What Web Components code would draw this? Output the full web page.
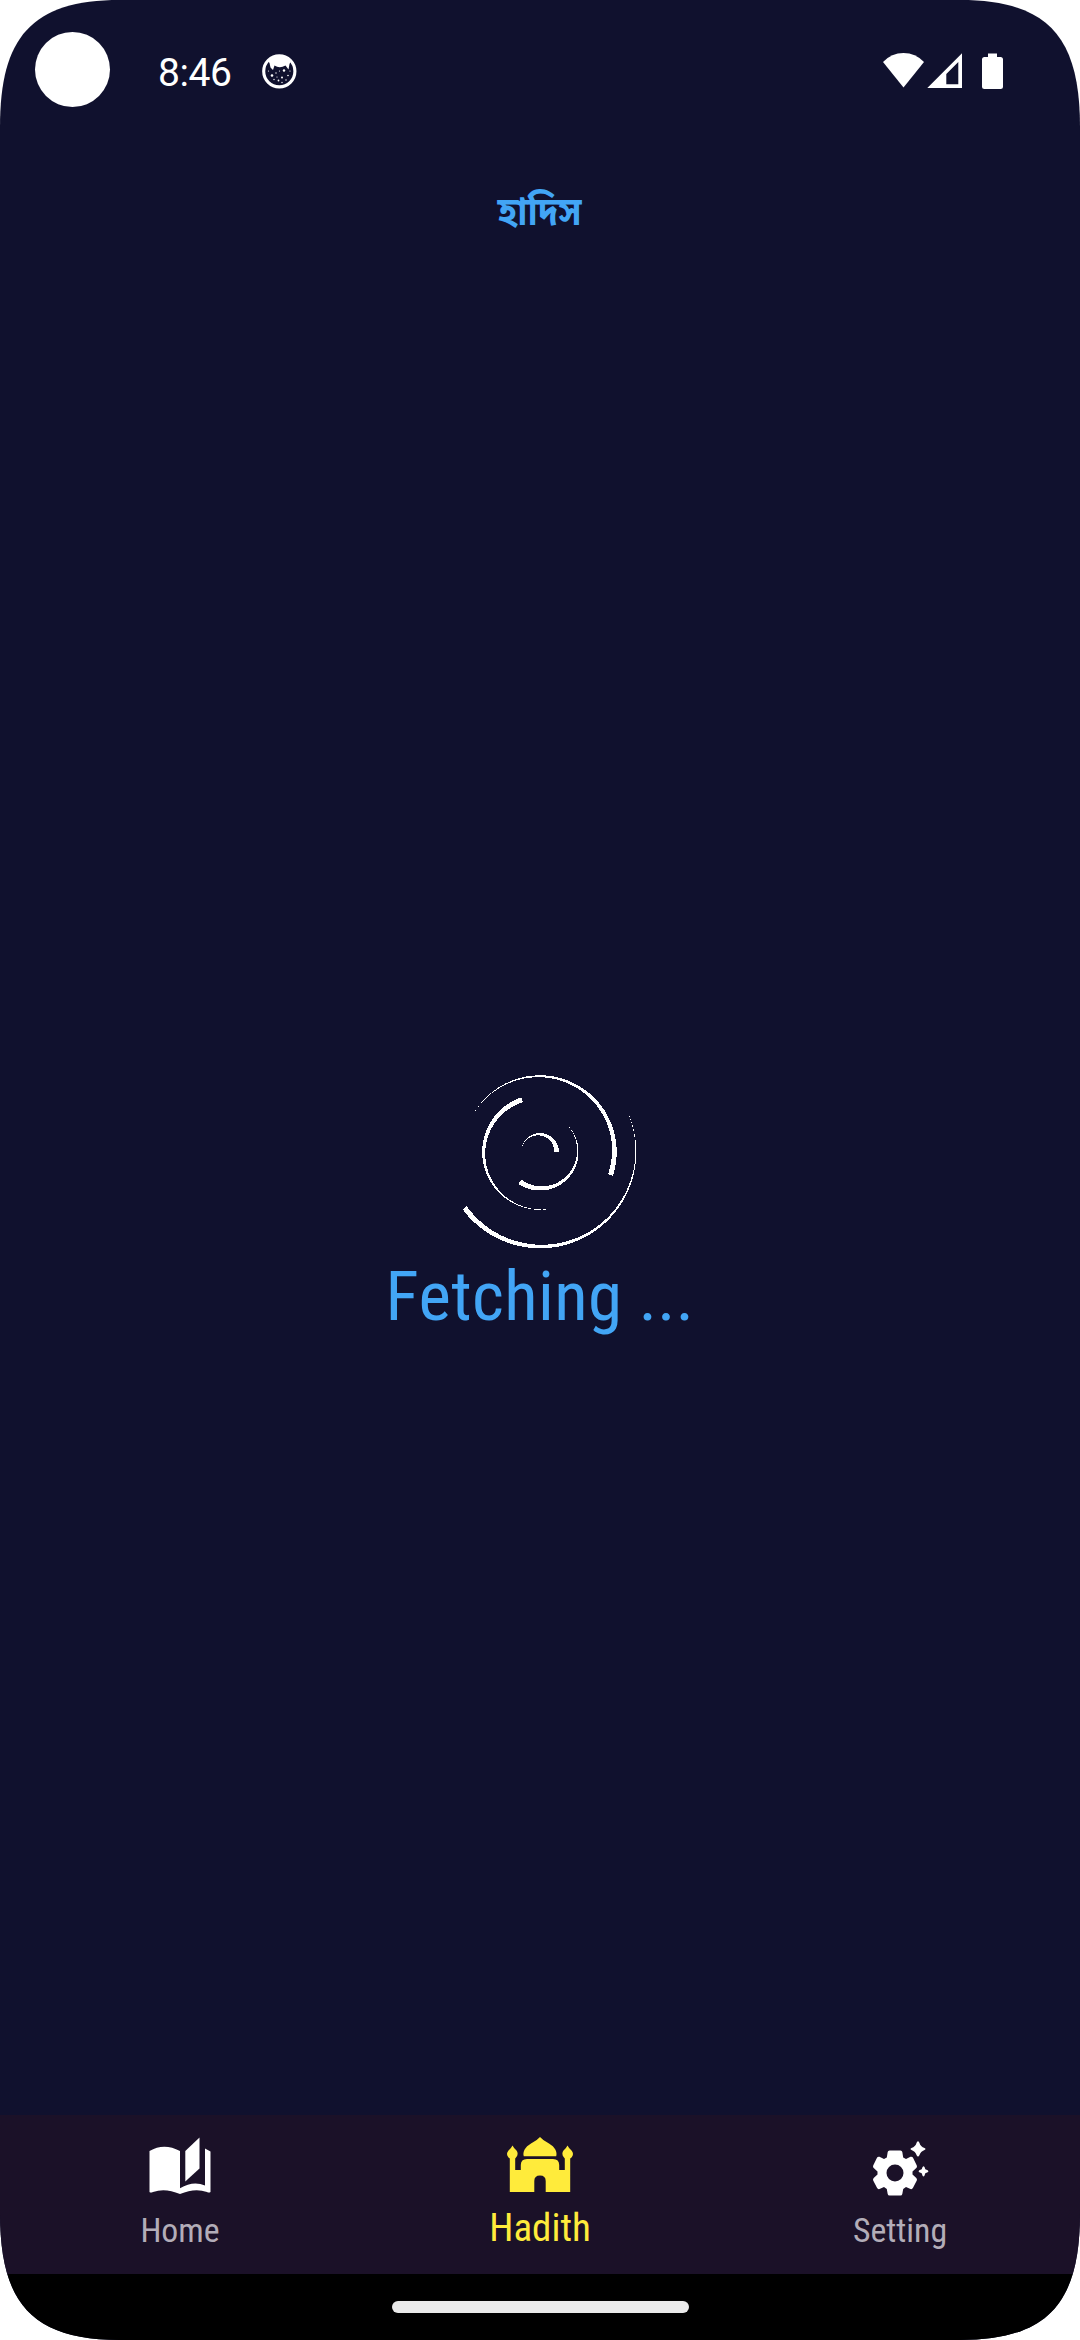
<!DOCTYPE html>
<html lang="bn">
<head>
<meta charset="utf-8">
<title>হাদিস</title>
<style>
html,body{margin:0;background:#fff;}
body{width:1080px;height:2340px;overflow:hidden;font-family:Roboto,"Liberation Sans",sans-serif;}
</style>
</head>
<body>
<hadith-app></hadith-app>
<script>
const define = (name, html, setup) => customElements.define(name, class extends HTMLElement {
  constructor() {
    super();
    this.attachShadow({mode: 'open'}).innerHTML = html;
  }
  connectedCallback() { if (setup) setup(this, this.shadowRoot); }
});

define('status-bar', `
<style>
:host{display:flex;height:142px;box-sizing:border-box;padding:32px 76px 0 35px;color:#fff;align-items:flex-start}
.cam{width:75px;height:75px;border-radius:50%;background:#fff}
.time{font-size:39px;letter-spacing:-.4px;line-height:48px;margin:17px 0 0 48px;width:104px;white-space:nowrap}
svg{display:block;flex:none}
.face{margin-top:22px}
.icons{margin-left:auto;margin-top:21px;display:flex}
</style>
<div class="cam"></div>
<div class="time">8:46</div>
<svg class="face" width="35" height="35" viewBox="0 0 35 35">
<circle cx="17.3" cy="17.3" r="15.6" fill="none" stroke="#fff" stroke-width="3.1"/>
<path d="M6 7Q17.500 -3 29 7L27.500 10L26.500 15.500L23.500 11.500Q17.500 15 12.500 11.500L11 16L8.500 13.500L7.500 9Z" fill="#fff"/>
<g fill="#fff"><circle cx="10" cy="21.500" r="1.300"/><circle cx="22" cy="16.500" r="1.200"/><circle cx="20" cy="23.500" r="1"/><circle cx="16.500" cy="26.500" r=".9"/><circle cx="26" cy="21.500" r=".8"/><circle cx="14" cy="19" r=".7"/><circle cx="24" cy="26" r=".7"/><circle cx="17.500" cy="17" r=".6"/><circle cx="12" cy="25.500" r=".7"/><circle cx="20" cy="28.500" r=".7"/><circle cx="6.500" cy="17" r=".6"/><circle cx="28" cy="17" r=".6"/><circle cx="15" cy="23" r=".6"/></g>
</svg>
<svg class="icons" width="121" height="37" viewBox="0 0 121 37" fill="#fff">
<path d="M0 9Q8.500 0 20.500 0T41 9L20.500 34.500Z"/>
<path fill-rule="evenodd" d="M44.300 35L79 .3V35ZM63.300 31.200H75.300V9L63.300 21Z"/>
<path d="M105 .5H114V4H117.500Q120 4 120 6.500V33.500Q120 36 117.500 36H101.500Q99 36 99 33.500V6.500Q99 4 101.500 4H105Z"/>
</svg>`);

define('title-bar', `
<style>
:host{display:flex;justify-content:center;height:128px;box-sizing:border-box;padding-top:49px;color:#42a5f5;font-weight:700;font-size:40px;line-height:48px;font-family:"Noto Sans Bengali","Noto Sans",sans-serif}
span{transform:scaleX(.906)}
</style><span><slot></slot></span>`);

define('ring-loader', `
<style>:host{display:block;width:200px;height:200px}svg{display:block}</style>
<svg width="200" height="200" viewBox="-100 -100 200 200" fill="#fff" shape-rendering="crispEdges"></svg>`,
(host, root) => {
  // Each ring sweeps almost half a turn and swells from a hairline to its head.
  const rings = [[19, 0], [38.5, 124], [57.8, 251], [76.7, 18], [96.3, 143.5]];
  const sweep = 171, steps = 90;
  root.querySelector('svg').innerHTML = rings.map(([r, head]) => {
    const outer = [], inner = [];
    for (let i = 0; i <= steps; i++) {
      const a = (head - sweep + i * sweep / steps) * Math.PI / 180, w = 5.2 * i / steps;
      outer.push((r * Math.cos(a)).toFixed(2) + ' ' + (r * Math.sin(a)).toFixed(2));
      inner.unshift(((r - w) * Math.cos(a)).toFixed(2) + ' ' + ((r - w) * Math.sin(a)).toFixed(2));
    }
    return '<path d="M' + outer.concat(inner).join('L') + 'Z"/>';
  }).join('');
});

define('loading-view', `
<style>
:host{display:flex;flex-direction:column;align-items:center;flex:1;padding-top:782px}
.msg{font-family:"Roboto Condensed",Roboto,sans-serif;font-stretch:75%;color:#42a5f5;font-size:69px;line-height:80px;letter-spacing:.4px;margin-top:5px;white-space:nowrap}
</style>
<ring-loader></ring-loader><div class="msg"><slot></slot></div>`);

define('nav-item', `
<style>
:host{display:flex;flex-direction:column;align-items:center;flex:1;color:#b3adb8;font-family:"Roboto Condensed",Roboto,sans-serif;font-stretch:75%;font-weight:370;font-size:33.8px;line-height:40px}
:host([active]){color:#ffeb3b;font-size:39px}
.icon{height:75px;padding-top:18px;box-sizing:border-box}
.label{margin-top:21px;white-space:nowrap}
:host([active]) .label{margin-top:18px}
</style>
<div class="icon"><slot name="icon"></slot></div><div class="label"><slot></slot></div>`);

define('bottom-nav', `
<style>:host{display:flex;height:159px;background:#1b1128}svg{display:block}</style>
<nav-item><svg slot="icon" width="70" height="64" viewBox="0 0 70 64" fill="#fff">
<path fill-rule="evenodd" d="M4.500 18Q19 9.500 35 18V55.300Q48 47.500 60 52.500V15.500L65.500 18.500V59Q64 60 62 59Q50 54.500 35 61Q20 54.500 8 59Q5.500 60 4.500 59Z"/>
<path d="M40.300 18L54.500 4.500V35.500L40.300 48.500Z"/></svg>Home</nav-item>
<nav-item active><svg slot="icon" width="70" height="64" viewBox="0 0 70 64" fill="#ffeb3b">
<path d="M35 4Q38 7.500 44 10.500C50 14 52.500 19 51.200 23.300H18.800C17.500 19 20 14 26 10.500Q32 7.500 35 4Z"/>
<path d="M7.500 12.500Q9 15.500 11.500 17.500Q14 21 11 24.500L10.200 25.500V37H15.800V32Q15.800 26 22 26H48Q54.200 26 54.200 32V37H59.800V25.500L59 24.500Q56 21 58.500 17.500Q61 15.500 62.500 12.500Q64 15.500 66.500 17.500Q69.500 21 66.500 24.500L65.200 25.500V59H40.700V48Q40.700 42.500 35 42.500T29.300 48V59H4.800V25.500L3.500 24.500Q.5 21 3.500 17.500Q6 15.500 7.500 12.500Z"/></svg>Hadith</nav-item>
<nav-item><svg slot="icon" width="70" height="64" viewBox="0 0 70 64" fill="#fff">
<path fill-rule="evenodd" d="M24.500 17.500H35.500Q37 17.500 37.300 19L38.200 24.500L41 26L45.500 23.800Q47 23.300 47.900 24.600L51.800 32.500Q52.400 34 51.300 35L47.500 38.500V41.500L51.300 45Q52.400 46 51.800 47.500L47.900 55Q47 56.500 45.500 56L41 54L38.200 56L37.300 61Q37 62.500 35.500 62.500H24.500Q23 62.500 22.700 61L21.800 56L19 54L14.500 56Q13 56.500 12.100 55L8.200 47.500Q7.600 46 8.700 45L12.500 41.500V38.500L8.700 35Q7.600 34 8.200 32.500L12.100 24.600Q13 23.300 14.500 23.800L19 26L21.800 24.500L22.700 19Q23 17.500 24.500 17.500ZM30 31.500A8.500 8.500 0 1 0 30 48.500A8.500 8.500 0 1 0 30 31.500Z"/>
<path d="M53 8.300Q54 8.300 54.500 10Q55.500 13.500 59.500 15Q61.500 16 59.500 17Q55.500 18.500 54.500 22Q53 25 51.500 22Q50.500 18.500 46.500 17Q44.500 16 46.500 15Q50.500 13.500 51.500 10Q52 8.300 53 8.300ZM58.500 33.300Q59.500 33 60.300 36.300Q63.500 37.500 63.500 38.300Q63.500 39.200 60.300 40.300Q59.500 43.500 58.500 43.500Q57.500 43.500 56.700 40.300Q53.500 39.200 53.500 38.300Q53.500 37.500 56.700 36.300Q57.500 33.300 58.500 33.300Z"/></svg>Setting</nav-item>`);

define('gesture-bar', `
<style>:host{display:flex;justify-content:center;align-items:flex-start;height:66px;background:#000;box-sizing:border-box;padding-top:27px}
i{display:block;width:297px;height:12px;border-radius:6px;background:#eaeaea}</style><i></i>`);

define('hadith-app', `
<style>
:host{display:flex;flex-direction:column;width:1080px;height:2340px;background:#10112e;
clip-path:path("M0 127C0 38 31 0 120 0H960C1049 0 1080 38 1080 127V2213C1080 2302 1049 2340 960 2340H120C31 2340 0 2302 0 2213Z")}
</style>
<status-bar></status-bar>
<title-bar>হাদিস</title-bar>
<loading-view>Fetching ...</loading-view>
<bottom-nav></bottom-nav>
<gesture-bar></gesture-bar>`);
</script>
</body>
</html>
